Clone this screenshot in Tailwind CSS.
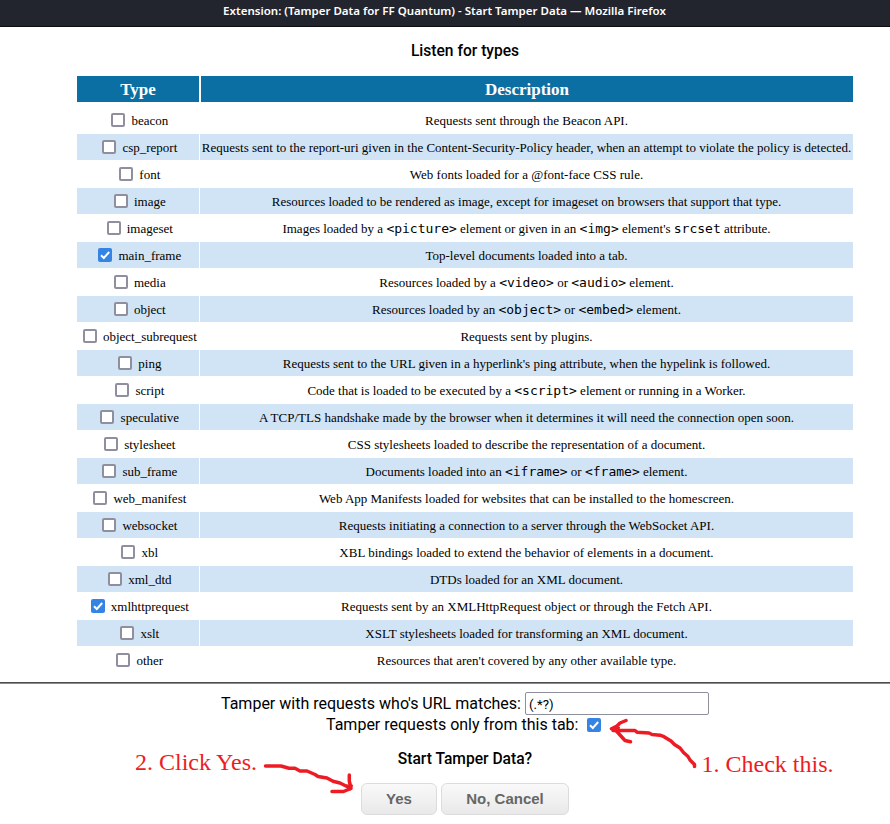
<!DOCTYPE html>
<html lang="en">
<head>
<meta charset="utf-8">
<title>Start Tamper Data</title>
<script src="https://cdn.jsdelivr.net/npm/@tailwindcss/browser@4"></script>
</head>
<body class="relative h-[824px] w-[890px] overflow-hidden bg-white text-black">
<header class="h-[27px] border-b border-[#0c0d11] bg-[#23252e] pr-px text-center font-['Noto_Sans',sans-serif] text-[11.53px] leading-[22px] font-semibold text-white"><span class="whitespace-nowrap">Extension: (Tamper Data for FF Quantum) - Start Tamper Data — Mozilla Firefox</span></header>
<main>
<h1 class="h-[49px] pl-10 text-center font-[Roboto,sans-serif] text-[15.6px] leading-[48px] font-medium"><span>Listen for types</span></h1>
<section class="ml-[77px] w-[776px] font-['Liberation_Serif',serif]">
<div class="mb-[5px] grid h-[26px] grid-cols-[122px_652px] gap-[2px] text-center text-[17px] leading-[25px] font-bold text-white">
<div class="bg-[#0b6fa4] pt-px">Type</div><div class="bg-[#0b6fa4] pt-px">Description</div>
</div>
<div id="rows" class="flex flex-col gap-px text-center text-[13px] leading-[26px] whitespace-nowrap"></div>
</section>
<div class="mt-[9px] h-[2px] border-t border-[#4d4d4d] bg-[#8a8a8a]"></div>
<section class="font-[Roboto,sans-serif] text-[16px]">
<div class="flex h-[31px] items-end pl-[221px] leading-[22px]"><label class="w-[304px] whitespace-nowrap">Tamper with requests who's URL matches:</label><div class="h-[23px] w-[184px] rounded-[2px] border border-[#8f8f9d] pl-[3px] text-[13.33px] leading-[23px]">(.*?)</div></div>
<div class="flex h-[20px] items-center pl-[326px] whitespace-nowrap"><label class="w-[261px] leading-[20px]">Tamper requests only from this tab:</label>
<svg class="size-[14px]" viewBox="0 0 14 14"><rect width="14" height="14" rx="2" fill="#3584e4"/><path d="M3 7.2 5.8 10 11.2 4" fill="none" stroke="#fff" stroke-width="2"/></svg></div>
<h2 class="h-[48px] pl-10 text-center text-[15.6px] leading-[48px] font-medium">Start Tamper Data?</h2>
<div class="flex gap-[4px] pl-[361px] font-['Liberation_Sans',sans-serif] text-[15px] font-bold text-[#666666]">
<button class="h-[32px] w-[76px] rounded-[6px] border border-[#dcdcdc] bg-linear-to-b from-[#f9f9f9] to-[#e9e9e9]">Yes</button>
<button class="h-[32px] w-[128px] rounded-[6px] border border-[#dcdcdc] bg-linear-to-b from-[#f9f9f9] to-[#e9e9e9]">No, Cancel</button>
</div>
</section>
</main>
<div class="absolute top-[748px] left-[135px] font-['Liberation_Serif',serif] text-[24px] leading-[28px] whitespace-nowrap text-[#ed1c24]">2. Click Yes.</div>
<div class="absolute top-[750px] left-[701.5px] font-['Liberation_Serif',serif] text-[24px] leading-[28px] whitespace-nowrap text-[#ed1c24]">1. Check this.</div>
<svg class="pointer-events-none absolute inset-0" width="890" height="824" viewBox="0 0 890 824" fill="none" stroke="#ed1c24" stroke-width="3.5" stroke-linecap="round" stroke-linejoin="round">
<path d="M265.5 766H281L289 768.3H295L300 771H307L315 774.5 318 776.5 327 778 333 781.2 340 783 345 785.5 351 788.3M349.3 775V781L351 788.3 343.5 791.5H332"/>
<path d="M694.5 766.5V764.5L690 760 688 756.5 683.5 752.5 680 748 674.5 744.5 671 741 664 736.7 660 735.2 652 734.5 649 733 637 732.2 635 730.5H613M626 720.5 620 723 617 726 611.5 728.7 617 731.5 620 735 625 740.5 630.5 741.8"/>
<path d="M346 785.5 352 785.5 350 789.5Z M612 729 619 727.5 618 731.5Z" fill="#ed1c24" stroke-width="2"/>
</svg>
<script>
const rows = [
['beacon','Requests sent through the Beacon API.'],
['csp_report','Requests sent to the report-uri given in the Content-Security-Policy header, when an attempt to violate the policy is detected.'],
['font','Web fonts loaded for a @font-face CSS rule.'],
['image','Resources loaded to be rendered as image, except for imageset on browsers that support that type.'],
['imageset',"Images loaded by a `<picture>` element or given in an `<img>` element's `srcset` attribute."],
['main_frame','Top-level documents loaded into a tab.',1],
['media','Resources loaded by a `<video>` or `<audio>` element.'],
['object','Resources loaded by an `<object>` or `<embed>` element.'],
['object_subrequest','Requests sent by plugins.'],
['ping',"Requests sent to the URL given in a hyperlink's ping attribute, when the hypelink is followed."],
['script','Code that is loaded to be executed by a `<script>` element or running in a Worker.'],
['speculative','A TCP/TLS handshake made by the browser when it determines it will need the connection open soon.'],
['stylesheet','CSS stylesheets loaded to describe the representation of a document.'],
['sub_frame','Documents loaded into an `<iframe>` or `<frame>` element.'],
['web_manifest','Web App Manifests loaded for websites that can be installed to the homescreen.'],
['websocket','Requests initiating a connection to a server through the WebSocket API.'],
['xbl','XBL bindings loaded to extend the behavior of elements in a document.'],
['xml_dtd','DTDs loaded for an XML document.'],
['xmlhttprequest','Requests sent by an XMLHttpRequest object or through the Fetch API.',1],
['xslt','XSLT stylesheets loaded for transforming an XML document.'],
['other',"Resources that aren't covered by any other available type."]
];
const esc = s => s.replace(/</g,'&lt;').replace(/>/g,'&gt;');
document.getElementById('rows').innerHTML = rows.map(([n,d,c],i) => {
  const bg = i % 2 ? 'bg-[#d1e4f5]' : 'bg-white';
  const box = c
    ? '<svg class="mr-[6.2px] ml-[3.5px] size-[14px] shrink-0" viewBox="0 0 14 14"><rect width="14" height="14" rx="2" fill="#3584e4"/><path d="M3 7.2 5.8 10 11.2 4" fill="none" stroke="#fff" stroke-width="2"/></svg>'
    : '<span class="mr-[6.2px] ml-[3.5px] size-[14px] shrink-0 rounded-[2px] border-2 border-[#8f8f9d] bg-white"></span>';
  const desc = esc(d).replace(/`(.*?)`/g, "<code class=\"font-[DejaVu_Sans_Mono,monospace] text-[13px] leading-none\">$1</code>");
  return `<div class="grid h-[26px] grid-cols-[122px_653px] gap-px"><div class="flex items-center justify-center ${bg}">${box}<span class="h-[26px] pt-px leading-[25px]">${n}</span></div><div class="h-[26px] pt-px leading-[25px] ${bg}">${desc}</div></div>`;
}).join('');
</script>
</body>
</html>
